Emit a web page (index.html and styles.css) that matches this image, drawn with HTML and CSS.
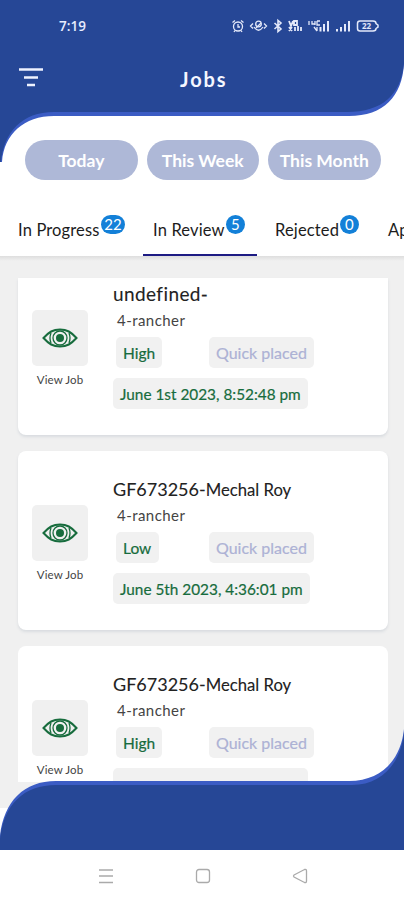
FILE: index.html
```html
<!DOCTYPE html>
<html lang="en">
<head>
<meta charset="utf-8">
<title>Jobs</title>
<link rel="stylesheet" href="styles.css">
</head>
<body>
<svg class="defs" width="0" height="0">
  <symbol id="eye" viewBox="0 0 36 20">
    <g fill="none" stroke="#176c3d" stroke-width="2">
      <path d="M1.500 10C7 4 11 1.500 18 1.500S29 4 34.500 10C29 16 25 18.500 18 18.500S7 16 1.500 10Z"/>
      <circle cx="18" cy="10" r="7" stroke-width="1.300"/>
      <path d="M9 5Q7 10 9 15M27 5Q29 10 27 15" stroke-width="1.300"/>
    </g>
    <circle cx="18" cy="10" r="4" fill="#176c3d"/>
  </symbol>
</svg>
<div class="phone">
  <header class="header">
    <svg class="shape" width="404" height="163" viewBox="0 0 404 163">
      <path fill="#3b5cc4" d="M0 0H404V64C402 96 384 116 349 116H54C24 116 4 134 2 162H0Z"/>
      <path fill="#264796" d="M0 0H404V63C401 95 382 112 347 112H54C22 112 4 132 1 162H0Z"/>
    </svg>
    <div class="status">
      <span class="time">7:19</span>
      <svg class="status-icons" width="150" height="16" viewBox="0 0 150 16" fill="none" stroke="#e4e9fa" stroke-width="1.300">
        <circle cx="7" cy="8.500" r="4.500"/><path d="M7 6V9H9M1.500 4.500L4 2.500M12.500 4.500L10 2.500M4 12.500L3 14M10 12.500L11 14"/>
        <path d="M22 5.500L19.500 8L22 10.500M33 5.500L35.500 8L33 10.500M23 9Q27.500 15.500 32 9"/><circle cx="27.500" cy="6" r="2.800"/><path d="M25 10L30 5"/>
        <path d="M43.500 5L50 11L47 13.500V2.500L50 5L43.500 11" stroke-width="1.600"/>
        <path d="M58 3L60 8L62 3M63 3V7H66V3ZM58 13L61 9M58 9L61 13M64 13V9M67 13V8M70 13V9" stroke-width="1.800"/>
        <path d="M78 3V7M81 3V6H84M84 3V7M86 3H89M86 3V7H89M83 9L86 13M86 9V13"/><path d="M89.500 13.500V9M93 13.500V6M97 13.500V3" stroke-width="2"/>
        <path d="M106 13.500V11M110 13.500V9M114 13.500V6M118 13.500V3" stroke-width="2"/>
        <path d="M129 3H142Q145 3 145 5.500L147 7V9L145 10.500Q145 13 142 13H129Q126.500 13 126.500 10.500V5.500Q126.500 3 129 3Z" stroke-width="1.500"/>
        <text x="131" y="10.800" class="battery">22</text>
      </svg>
    </div>
    <div class="titlebar">
      <svg class="menu" width="26" height="22" viewBox="0 0 26 22"><path d="M1 2.500H25M6 10.500H20M9 18H17" stroke="#eef2ff" stroke-width="2.600"/></svg>
      <h1>Jobs</h1>
    </div>
  </header>

  <div class="filters">
    <button>Today</button><button>This Week</button><button>This Month</button>
  </div>

  <nav class="tabs">
    <div class="tab t1"><span>In Progress</span><b class="wide">22</b></div>
    <div class="tab t2 active"><span>In Review</span><b>5</b></div>
    <div class="tab t3"><span>Rejected</span><b>0</b></div>
    <div class="tab t4"><span>Approved</span></div>
  </nav>

  <main class="list">
    <article class="card first">
      <div class="view"><div class="thumb"><svg width="36" height="20"><use href="#eye"/></svg></div><span>View Job</span></div>
      <div class="info">
        <h2 class="undef">undefined-</h2><p>4-rancher</p>
        <div class="tags"><span class="tag">High</span><span class="tag quick">Quick placed</span></div>
        <span class="tag date d1">June 1st 2023, 8:52:48 pm</span>
      </div>
    </article>
    <article class="card">
      <div class="view"><div class="thumb"><svg width="36" height="20"><use href="#eye"/></svg></div><span>View Job</span></div>
      <div class="info">
        <h2><span class="code">GF673256-</span>Mechal Roy</h2><p>4-rancher</p>
        <div class="tags"><span class="tag low">Low</span><span class="tag quick">Quick placed</span></div>
        <span class="tag date">June 5th 2023, 4:36:01 pm</span>
      </div>
    </article>
    <article class="card last">
      <div class="view"><div class="thumb"><svg width="36" height="20"><use href="#eye"/></svg></div><span>View Job</span></div>
      <div class="info">
        <h2><span class="code">GF673256-</span>Mechal Roy</h2><p>4-rancher</p>
        <div class="tags"><span class="tag">High</span><span class="tag quick">Quick placed</span></div>
        <span class="tag date d3"></span>
      </div>
    </article>
  </main>

  <footer class="footer">
    <svg class="wave" width="404" height="122" viewBox="0 0 404 122">
      <path fill="#fff" d="M0 79H20V122H0Z"/>
      <path fill="#3b5cc4" d="M0 122V107C4 72 24 52 56 52H349C382 52 401 30 404 0V122Z"/>
      <path fill="#264796" d="M0 122V110C4 75 24 56 56 56H352C382 56 401 34 404 3V122Z"/>
    </svg>
  </footer>
  <div class="sysnav">
    <svg width="16" height="16" viewBox="0 0 16 16"><path d="M1 2H15M1 8H15M1 14.500H15"/></svg>
    <svg width="16" height="16" viewBox="0 0 16 16"><rect x="1.500" y="1.500" width="13" height="13" rx="2.500"/></svg>
    <svg width="16" height="16" viewBox="0 0 16 16"><path d="M2 7L12.500 1.500Q14.500 1 14.500 3V13Q14.500 15 12.500 14.500L2 9Q1 8 2 7Z"/></svg>
  </div>
</div>
</body>
</html>
```

FILE: styles.css
```css
* { box-sizing: border-box; }
body { margin: 0; background: #fff; font-family: Lato, "Open Sans", sans-serif; color: #222; }
h1, h2, p { margin: 0; font-weight: 400; }
.defs { display: block; }
.phone { width: 404px; height: 900px; display: flex; flex-direction: column; overflow: hidden; background: #fff; }
.header { position: relative; height: 116px; flex: none; }
.shape { position: absolute; left: 0; top: 0; }
.status { position: relative; display: flex; justify-content: space-between; align-items: center; height: 52px; padding: 0 23px 0 59px; }
.time { font: 600 13.5px "Open Sans", sans-serif; color: #e8edff; }
.battery { font: 700 8px "Open Sans", sans-serif; fill: #e4e9fa; stroke: none; }
.titlebar { position: relative; display: flex; align-items: center; height: 52px; padding-left: 18px; }
.menu { flex: none; }
h1 { font-size: 20px; font-weight: 700; letter-spacing: 1.9px; color: #f4f6ff; margin-left: 136px; line-height: 24px; padding-top: 2px; }
.filters { display: flex; gap: 9px; padding: 24px 0 0 25px; height: 87px; flex: none; position: relative; }
.filters button { width: 112.5px; height: 40px; border: 0; padding: 1px 0 0; border-radius: 20px; background: #aeb8d7; color: #fff; font: 700 17.5px Lato, sans-serif; white-space: nowrap; }
.tabs { display: flex; height: 53px; flex: none; overflow: hidden; position: relative; }
.tab { display: flex; flex: none; padding: 12px 0 0 18px; font-size: 16.5px; line-height: 31px; letter-spacing: .15px; white-space: nowrap; color: #1c1c1c; }
.t1 { width: 143px; }
.t1 span { width: 82px; }
.t2 { width: 114px; padding-left: 10px; }
.t2 span { width: 72px; }
.t3 { width: 113px; }
.t3 span { width: 64px; }
.t4 { width: 120px; }
.active { border-bottom: 2px solid #1d1b83; }
.tab b { width: 19px; height: 19px; border-radius: 10px; background: #1380d8; color: #fff; font-size: 15px; font-weight: 400; line-height: 19px; text-align: center; margin: 0 0 0 1px; }
.tab b.wide { width: 24px; }
.list { height: 594px; flex: none; overflow: hidden; background: linear-gradient(#dedede, #f0f0f0 5px); padding: 22px 16px 0 18px; }
.card { height: 179px; margin-bottom: 16px; border-radius: 8px; background: #fff; box-shadow: 0 2px 3px #d9dce0; display: flex; padding: 25px 0 0 14px; }
.card.first { height: 157px; border-radius: 0 0 8px 8px; padding-top: 3px; }
.card.last { height: 136px; overflow: hidden; border-radius: 8px 8px 0 0; box-shadow: none; }
.view { width: 56px; padding-top: 29px; text-align: center; font-size: 11.5px; color: #444; white-space: nowrap; letter-spacing: .1px; }
.thumb { display: flex; align-items: center; justify-content: center; height: 56px; border-radius: 5px; background: #f0f0f0; margin-bottom: 7px; }
.info { margin-left: 25px; }
h2 { font-size: 16.7px; line-height: 26px; height: 27px; white-space: nowrap; -webkit-text-stroke: .1px; }
.undef { font-size: 19px; letter-spacing: .4px; }
.code { font-size: 18px; }
.info p { font-size: 15px; line-height: 24px; height: 29px; padding-left: 4px; color: #444; letter-spacing: .45px; }
.tags { display: flex; height: 41px; padding-left: 3px; }
.tag { display: block; width: 46px; height: 31px; padding: 0 0 0 7px; border-radius: 5px; background: #f1f1f1; color: #176c3d; font-size: 15.5px; line-height: 32px; white-space: nowrap; -webkit-text-stroke: .2px; }
.tag.low { width: 43px; }
.tag.quick { width: 105px; margin-left: 47px; color: #adb2d5; font-size: 16px; }
.tag.low + .quick { margin-left: 50px; }
.tag.date { width: 197px; font-size: 15.35px; }
.tag.d1, .tag.d3 { width: 195px; }
.footer { position: relative; height: 0; flex: none; }
.wave { position: absolute; left: 0; bottom: -1px; }
.sysnav { position: relative; height: 50px; flex: none; background: #fff; display: flex; justify-content: center; gap: 81px; padding: 18px 0 0 1px; }
.sysnav svg { fill: none; stroke: #aaa; stroke-width: 1.3; }
```
